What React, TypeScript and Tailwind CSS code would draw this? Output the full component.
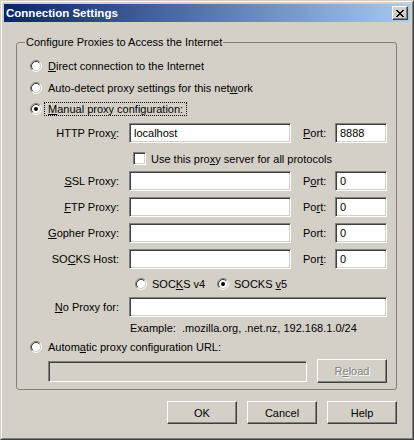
import React from "react";

const FONT = "font-['Liberation_Sans',Arial,sans-serif]";
const SUNKEN =
  "border border-t-[#808080] border-l-[#808080] border-r-white border-b-white shadow-[inset_1px_1px_0_#404040,inset_-1px_-1px_0_#d4d0c8]";
const RAISED =
  "border border-t-white border-l-white border-r-[#404040] border-b-[#404040] shadow-[inset_-1px_-1px_0_#808080] bg-[#d4d0c8]";

function Radio({ checked = false }: { checked?: boolean }) {
  return (
    <svg width="12" height="12" viewBox="0 0 12 12" className="shrink-0 block">
      <circle cx="6" cy="6" r="4.2" fill="#ffffff" />
      <path d="M2.11 9.89 A5.5 5.5 0 0 1 9.89 2.11" fill="none" stroke="#808080" strokeWidth="1" />
      <path d="M9.89 2.11 A5.5 5.5 0 0 1 2.11 9.89" fill="none" stroke="#ffffff" strokeWidth="1" />
      <path d="M2.82 9.18 A4.5 4.5 0 0 1 9.18 2.82" fill="none" stroke="#404040" strokeWidth="1" />
      <path d="M9.18 2.82 A4.5 4.5 0 0 1 2.82 9.18" fill="none" stroke="#d4d0c8" strokeWidth="1" />
      {checked && <circle cx="6" cy="6" r="2" fill="#000000" />}
    </svg>
  );
}

function U({ children }: { children: React.ReactNode }) {
  return <span className="underline underline-offset-[1px]">{children}</span>;
}

function Field({ w, value, disabled = false, h = "h-[20px]" }: { w: string; value?: string; disabled?: boolean; h?: string }) {
  return (
    <div className={`${SUNKEN} ${w} ${h} ${disabled ? "bg-[#d4d0c8]" : "bg-white"} flex items-center pl-[4px] shrink-0`}>
      {value}
    </div>
  );
}

function RadioRow({ checked, focus, children }: { checked?: boolean; focus?: boolean; children: React.ReactNode }) {
  return (
    <div className="flex items-center h-[14px] pl-[13px] gap-[2px]">
      <Radio checked={checked} />
      <span className={`border ${focus ? "border-dotted border-black" : "border-transparent"} px-[3px] leading-[12px] whitespace-nowrap`}>
        {children}
      </span>
    </div>
  );
}

function ProxyRow({ label, port, value, portValue }: { label: React.ReactNode; port: React.ReactNode; value?: string; portValue: string }) {
  return (
    <div className="flex items-center h-[20px]">
      <div className="w-[102px] text-right whitespace-nowrap shrink-0">{label}</div>
      <div className="ml-[10px]">
        <Field w="w-[162px]" value={value} />
      </div>
      <div className="ml-[12px] w-[32px] shrink-0 whitespace-nowrap">{port}</div>
      <Field w="w-[52px]" value={portValue} />
    </div>
  );
}

function Button({ children, disabled = false, w = "w-[70px]", h = "h-[23px]" }: { children: React.ReactNode; disabled?: boolean; w?: string; h?: string }) {
  return (
    <div
      className={`${RAISED} ${w} ${h} flex items-center justify-center shrink-0 ${
        disabled ? "text-[#808080] [text-shadow:1px_1px_0_#ffffff]" : "text-black"
      }`}
    >
      {children}
    </div>
  );
}

export default function App() {
  return (
    <div className={`${FONT} w-[414px] h-[440px] bg-[#d4d0c8] text-[11px] text-black leading-[14px]`}>
      <div className="w-full h-full border border-t-[#d4d0c8] border-l-[#d4d0c8] border-r-[#404040] border-b-[#404040]">
        <div className="w-full h-full border border-t-white border-l-white border-r-[#808080] border-b-[#808080] p-[2px] flex flex-col">
          {/* Title bar */}
          <div className="h-[18px] flex items-center justify-between pl-[2px] pr-[2px] bg-[linear-gradient(to_right,#0a246a,#a6caf0)] shrink-0">
            <span className="text-white font-bold text-[11.5px] leading-[14px]">Connection Settings</span>
            <div className={`${RAISED} w-[16px] h-[14px] flex items-center justify-center pr-[1px]`}>
              <svg width="8" height="7" viewBox="0 0 8 7" shapeRendering="crispEdges" className="block">
                <path
                  d="M0 0h2v1H0z M6 0h2v1H6z M1 1h2v1H1z M5 1h2v1H5z M2 2h4v1H2z M3 3h2v1H3z M2 4h4v1H2z M1 5h2v1H1z M5 5h2v1H5z M0 6h2v1H0z M6 6h2v1H6z"
                  fill="#000000"
                />
              </svg>
            </div>
          </div>

          {/* Group box */}
          <fieldset className="ml-[12px] mt-[14px] w-[381px] border border-[#808080] rounded-[3px] px-0 pb-[6px] min-w-0">
            <legend className="ml-[8px] px-[1px] leading-[13px]">Configure Proxies to Access the Internet</legend>
            <div className="flex flex-col pt-[10px]">
              <RadioRow>
                <U>D</U>irect connection to the Internet
              </RadioRow>
              <div className="mt-[8px]">
                <RadioRow>
                  Auto-detect proxy settings for this net<U>w</U>ork
                </RadioRow>
              </div>
              <div className="mt-[7px]">
                <RadioRow checked focus>
                  <U>M</U>anual proxy configuration:
                </RadioRow>
              </div>

              <div className="mt-[7px]">
                <ProxyRow
                  label={
                    <>
                      HTTP Prox<U>y</U>:
                    </>
                  }
                  port={
                    <>
                      <U>P</U>ort:
                    </>
                  }
                  value="localhost"
                  portValue="8888"
                />
              </div>

              <div className="mt-[9px] flex items-center h-[13px] pl-[116px] gap-[5px]">
                <div className={`${SUNKEN} bg-white w-[13px] h-[13px] shrink-0`} />
                <span className="whitespace-nowrap">
                  Use this pro<U>x</U>y server for all protocols
                </span>
              </div>

              <div className="mt-[6px]">
                <ProxyRow
                  label={
                    <>
                      <U>S</U>SL Proxy:
                    </>
                  }
                  port={
                    <>
                      P<U>o</U>rt:
                    </>
                  }
                  portValue="0"
                />
              </div>
              <div className="mt-[6px]">
                <ProxyRow
                  label={
                    <>
                      <U>F</U>TP Proxy:
                    </>
                  }
                  port={
                    <>
                      Po<U>r</U>t:
                    </>
                  }
                  portValue="0"
                />
              </div>
              <div className="mt-[6px]">
                <ProxyRow
                  label={
                    <>
                      <U>G</U>opher Proxy:
                    </>
                  }
                  port="Port:"
                  portValue="0"
                />
              </div>
              <div className="mt-[6px]">
                <ProxyRow
                  label={
                    <>
                      SO<U>C</U>KS Host:
                    </>
                  }
                  port={
                    <>
                      Por<U>t</U>:
                    </>
                  }
                  portValue="0"
                />
              </div>

              <div className="mt-[8px] flex items-center h-[13px] pl-[118px]">
                <div className="w-[82px] flex items-center gap-[5px]">
                  <Radio />
                  <span className="whitespace-nowrap">
                    SOC<U>K</U>S v4
                  </span>
                </div>
                <div className="flex items-center gap-[5px]">
                  <Radio checked />
                  <span className="whitespace-nowrap">
                    SOCKS <U>v</U>5
                  </span>
                </div>
              </div>

              <div className="mt-[7px] flex items-center h-[20px]">
                <div className="w-[102px] text-right whitespace-nowrap shrink-0">
                  <U>N</U>o Proxy for:
                </div>
                <div className="ml-[10px]">
                  <Field w="w-[258px]" />
                </div>
              </div>

              <div className="mt-[4px] h-[14px] pl-[113px] whitespace-nowrap">
                Example: &nbsp;.mozilla.org, .net.nz, 192.168.1.0/24
              </div>

              <div className="mt-[5px]">
                <RadioRow>
                  Autom<U>a</U>tic proxy configuration URL:
                </RadioRow>
              </div>

              <div className="mt-[5px] flex items-center h-[24px] pl-[31px]">
                <Field w="w-[259px]" h="h-[21px]" disabled />
                <div className="ml-[10px]">
                  <Button disabled h="h-[24px]">
                    <span>
                      R<U>e</U>load
                    </span>
                  </Button>
                </div>
              </div>
            </div>
          </fieldset>

          {/* Buttons */}
          <div className="mt-[11px] flex justify-end gap-[10px] pr-[13px]">
            <Button>OK</Button>
            <Button>Cancel</Button>
            <Button>Help</Button>
          </div>
        </div>
      </div>
    </div>
  );
}
